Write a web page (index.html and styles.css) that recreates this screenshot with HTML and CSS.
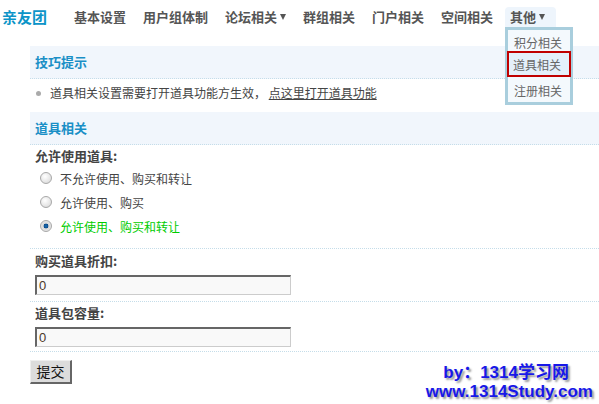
FILE: index.html
```html
<!DOCTYPE html>
<html lang="zh-CN">
<head>
<meta charset="utf-8">
<link rel="stylesheet" href="styles.css">
</head>
<body>
<div class="page">
  <header class="topbar">
    <div class="logo">亲友团</div>
    <nav class="nav">
      <span class="nav-item">基本设置</span>
      <span class="nav-item">用户组体制</span>
      <span class="nav-item">论坛相关<i class="caret"></i></span>
      <span class="nav-item">群组相关</span>
      <span class="nav-item">门户相关</span>
      <span class="nav-item">空间相关</span>
      <span class="nav-item nav-active">其他<i class="caret"></i>
        <div class="dropdown">
          <div class="dd-item dd-first">积分相关</div>
          <div class="dd-item dd-current">道具相关</div>
          <div class="dd-item dd-last">注册相关</div>
        </div>
      </span>
    </nav>
  </header>

  <main class="main">
    <div class="sec-head">技巧提示</div>
    <div class="tip"><span class="dot"></span>道具相关设置需要打开道具功能方生效，&nbsp;<a class="link">点这里打开道具功能</a></div>

    <div class="sec-head">道具相关</div>
    <div class="field field-1">
      <div class="label">允许使用道具:</div>
      <div class="radios">
        <div class="radio-row"><span class="radio"></span>不允许使用、购买和转让</div>
        <div class="radio-row"><span class="radio"></span>允许使用、购买</div>
        <div class="radio-row checked"><span class="radio on"></span>允许使用、购买和转让</div>
      </div>
    </div>
    <div class="field field-2">
      <div class="label">购买道具折扣:</div>
      <div class="input">0</div>
    </div>
    <div class="field field-3">
      <div class="label">道具包容量:</div>
      <div class="input">0</div>
    </div>
    <div class="actions"><span class="btn">提交</span></div>
  </main>

  <div class="watermark">
    <div class="wm-1">by：1314学习网</div>
    <div>www.1314Study.com</div>
  </div>
</div>
</body>
</html>
```
FILE: styles.css
```css
* { box-sizing: border-box; }
html, body { margin: 0; padding: 0; background: #fff; }
body {
  font-family: "Noto Sans CJK SC", "DejaVu Sans", sans-serif;
  font-size: 12px;
  color: #333;
  width: 599px;
  height: 404px;
  overflow: hidden;
}
.page { position: relative; width: 599px; height: 404px; }

.topbar {
  display: flex;
  align-items: flex-start;
  height: 34px;
  padding: 7px 0 0 2px;
}
.logo {
  font-size: 15px;
  font-weight: bold;
  color: #0c94c8;
  line-height: 20px;
  width: 72px;
}
.nav { display: flex; }
.nav-item {
  position: relative;
  font-size: 13px;
  font-weight: bold;
  color: #555;
  line-height: 20px;
  padding: 0 5px 0 0;
  margin-right: 12px;
  display: flex;
  align-items: center;
}
.caret {
  display: inline-block;
  width: 0; height: 0;
  border-left: 3.5px solid transparent;
  border-right: 3.5px solid transparent;
  border-top: 6px solid #555;
  margin-left: 3px;
}
.nav-active {
  background: #eef5fc;
  border-radius: 4px 4px 0 0;
  padding: 0 8px 0 5px;
  margin-left: -5px;
  width: 51px;
}
.dropdown {
  position: absolute;
  left: 0;
  top: 20px;
  width: 68px;
  border: 3px solid #a9cedd;
  background: #f4f9fd;
}
.dd-item {
  font-weight: normal;
  color: #666;
  font-size: 12px;
  line-height: 22px;
  padding-left: 6px;
}
.dd-first { height: 21px; line-height: 18px; padding-top: 4px; }
.dd-current {
  height: 26px;
  padding-top: 1px;
  padding-left: 4px;
  margin: 0 -1px;
  border: 2px solid #c00000;
  background: #e4f0fa;
}
.dd-last { height: 25px; padding-top: 3px; }

.main { margin-left: 30px; padding-top: 12px; }
.sec-head {
  background: #f1f6fc;
  height: 33px;
  line-height: 31px;
  padding-left: 5px;
  font-size: 13px;
  font-weight: bold;
  color: #1a8fc6;
  border-bottom: 1px dotted #c5dde9;
}
.tip {
  height: 33px;
  display: flex;
  align-items: center;
  padding: 0 0 5px 6px;
  line-height: 16px;
  color: #444;
  font-size: 12px;
}
.dot {
  width: 5px; height: 5px; border-radius: 50%;
  background: #aaa;
  margin-right: 9px;
}
.link { color: #444; text-decoration: underline; }

.field { border-bottom: 1px dotted #c5dde9; padding-left: 5px; }
.field-1 { padding-top: 1px; padding-bottom: 10px; }
.field-2 { padding-top: 2px; padding-bottom: 6px; }
.field-3 { padding-top: 1px; padding-bottom: 4px; }
.label {
  font-size: 13px;
  font-weight: bold;
  color: #444;
  line-height: 20px;
}
.radios { display: flex; flex-direction: column; padding-left: 5px; }
.radio-row {
  display: flex;
  align-items: center;
  height: 24px;
  color: #444;
  font-size: 12px;
}
.radio-row.checked { color: #00cc00; }
.radio {
  width: 12px; height: 12px;
  border-radius: 50%;
  border: 1px solid #a8a8a8;
  background: radial-gradient(circle at 40% 35%, #fff 0%, #e6e6e6 60%, #cfcfcf 100%);
  margin-right: 8px;
}
.radio.on {
  background: radial-gradient(circle, #1a6fb6 0%, #0b4c8c 30%, #d8d8d8 38%, #f0f0f0 100%);
}
.input {
  width: 256px;
  height: 20px;
  margin-top: 4px;
  background: #f9f9f9;
  border-top: 2px solid #666;
  border-left: 2px solid #666;
  border-right: 1px solid #ccc;
  border-bottom: 1px solid #ccc;
  padding-left: 2px;
  line-height: 17px;
  font-family: "Liberation Sans", sans-serif;
  font-size: 13px;
  color: #4b3a2a;
}
.actions { padding-top: 8px; }
.btn {
  display: inline-block;
  width: 42px;
  height: 24px;
  background: #dcdcdc;
  border-top: 1px solid #eee;
  border-left: 1px solid #eee;
  border-right: 2px solid #666;
  border-bottom: 2px solid #666;
  text-align: center;
  line-height: 21px;
  font-size: 14px;
  color: #111;
}

.watermark {
  position: absolute;
  right: 6px;
  top: 363px;
  text-align: right;
  font-family: "Liberation Sans", "Noto Sans CJK SC", sans-serif;
  font-weight: bold;
  font-size: 17px;
  line-height: 19px;
  color: #1818e8;
  text-shadow: 2px 2px 2px #999;
}
.wm-1 { margin-right: 24px; }
```
